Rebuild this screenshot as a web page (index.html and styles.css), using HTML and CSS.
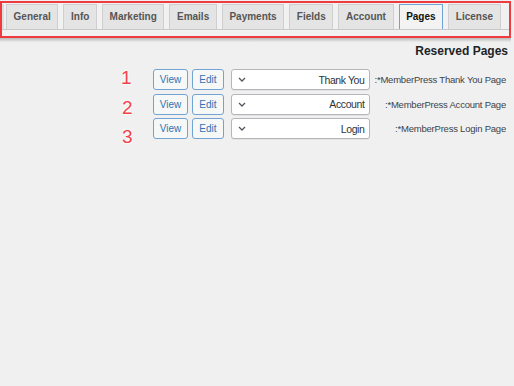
FILE: index.html
```html
<!DOCTYPE html>
<html lang="en">
<head>
<meta charset="utf-8">
<title>Pages</title>
<link rel="stylesheet" href="styles.css">
</head>
<body>
<div class="stage">
  <div class="frame">
    <nav class="tabs">
      <span class="tab-stub"></span>
      <span class="tab">General</span>
      <span class="tab">Info</span>
      <span class="tab">Marketing</span>
      <span class="tab">Emails</span>
      <span class="tab">Payments</span>
      <span class="tab">Fields</span>
      <span class="tab">Account</span>
      <span class="tab tab-active">Pages</span>
      <span class="tab">License</span>
    </nav>
  </div>
  <div class="shadow"></div>

  <h2 class="heading">Reserved Pages</h2>

  <div class="pages">
    <span class="btn">View</span>
    <span class="btn btn-edit">Edit</span>
    <div class="select">
      <svg class="chev" width="8" height="5" viewBox="0 0 8 5"><path d="M1 1 L4 4 L7 1" fill="none" stroke="#50575e" stroke-width="1.3"/></svg>
      <span class="select-text">Thank You</span>
    </div>
    <span class="label">:*MemberPress Thank You Page</span>

    <span class="btn">View</span>
    <span class="btn btn-edit">Edit</span>
    <div class="select">
      <svg class="chev" width="8" height="5" viewBox="0 0 8 5"><path d="M1 1 L4 4 L7 1" fill="none" stroke="#50575e" stroke-width="1.3"/></svg>
      <span class="select-text">Account</span>
    </div>
    <span class="label">:*MemberPress Account Page</span>

    <span class="btn">View</span>
    <span class="btn btn-edit">Edit</span>
    <div class="select">
      <svg class="chev" width="8" height="5" viewBox="0 0 8 5"><path d="M1 1 L4 4 L7 1" fill="none" stroke="#50575e" stroke-width="1.3"/></svg>
      <span class="select-text">Login</span>
    </div>
    <span class="label">:*MemberPress Login Page</span>
  </div>

  <span class="num num-1">1</span>
  <span class="num num-2">2</span>
  <span class="num num-3">3</span>
</div>
</body>
</html>
```
FILE: styles.css
```css
html, body {
  margin: 0;
  padding: 0;
  background: #f0f0f0;
}
body {
  font-family: "Liberation Sans", Arial, sans-serif;
  width: 514px;
  height: 386px;
  overflow: hidden;
}
.stage {
  position: relative;
  width: 514px;
  height: 386px;
}
.frame {
  margin: 1px 3px 0 0;
  border: 2px solid #ef3b40;
  padding: 1px 0 6px 0;
  background: #f1f1f1;
}
.tabs {
  display: flex;
  gap: 5px;
  height: 25px;
  border-bottom: 1px solid #c9c9c9;
  overflow: hidden;
}
.tab-stub {
  width: 2px;
  margin-right: -3px;
  background: #dcdcdc;
}
.tab {
  box-sizing: border-box;
  height: 25px;
  line-height: 24px;
  padding: 0 6.6px;
  background: #e4e4e4;
  border: 1px solid #cfcfcf;
  border-bottom: none;
  font-size: 10px;
  font-weight: bold;
  color: #555;
  white-space: nowrap;
}
.tab-active {
  background: #f3f3f3;
  border: 1px solid #6fa3d8;
  color: #111;
  height: 26px;
}
.shadow {
  height: 4px;
  margin-right: 3px;
  background: linear-gradient(#b9b9b9, #ececec);
}
.heading {
  margin: 2px 6px 0 0;
  text-align: right;
  font-size: 12px;
  font-weight: bold;
  color: #1d2327;
  line-height: 14px;
}
.pages {
  display: grid;
  grid-template-columns: auto auto 146px auto;
  justify-content: end;
  row-gap: 3.5px;
  margin-top: 11px;
  padding-right: 8px;
}
.btn {
  box-sizing: border-box;
  height: 21px;
  line-height: 19px;
  padding: 0 6px;
  border: 1px solid #72a3d2;
  border-radius: 3px;
  background: #f6f7f7;
  color: #2f73b3;
  font-size: 10px;
  text-align: center;
}
.btn-edit {
  margin-left: 4px;
  padding: 0 6px;
}
.select {
  box-sizing: border-box;
  height: 21px;
  margin-left: 7px;
  border: 1px solid #b4b6b9;
  border-radius: 3px;
  background: #fff;
  display: flex;
  align-items: center;
  justify-content: space-between;
  padding: 0 4px 0 6px;
  box-shadow: 0 1px 0 rgba(0,0,0,0.05);
}
.chev {
  display: block;
}
.select-text {
  font-size: 10.5px;
  letter-spacing: -0.4px;
  color: #2c3338;
}
.label {
  margin-left: 5px;
  text-align: right;
  font-size: 9.5px;
  letter-spacing: -0.22px;
  line-height: 21px;
  color: #3c434a;
  white-space: nowrap;
}
.num {
  position: absolute;
  font-size: 19px;
  line-height: 19px;
  color: #ef434a;
  text-shadow: 0 0 2px #fff, 0 0 2px #fff, 0 0 3px #fff;
}
.num-1 { left: 121px; top: 67px; }
.num-2 { left: 122px; top: 97px; }
.num-3 { left: 122px; top: 126px; }
```
